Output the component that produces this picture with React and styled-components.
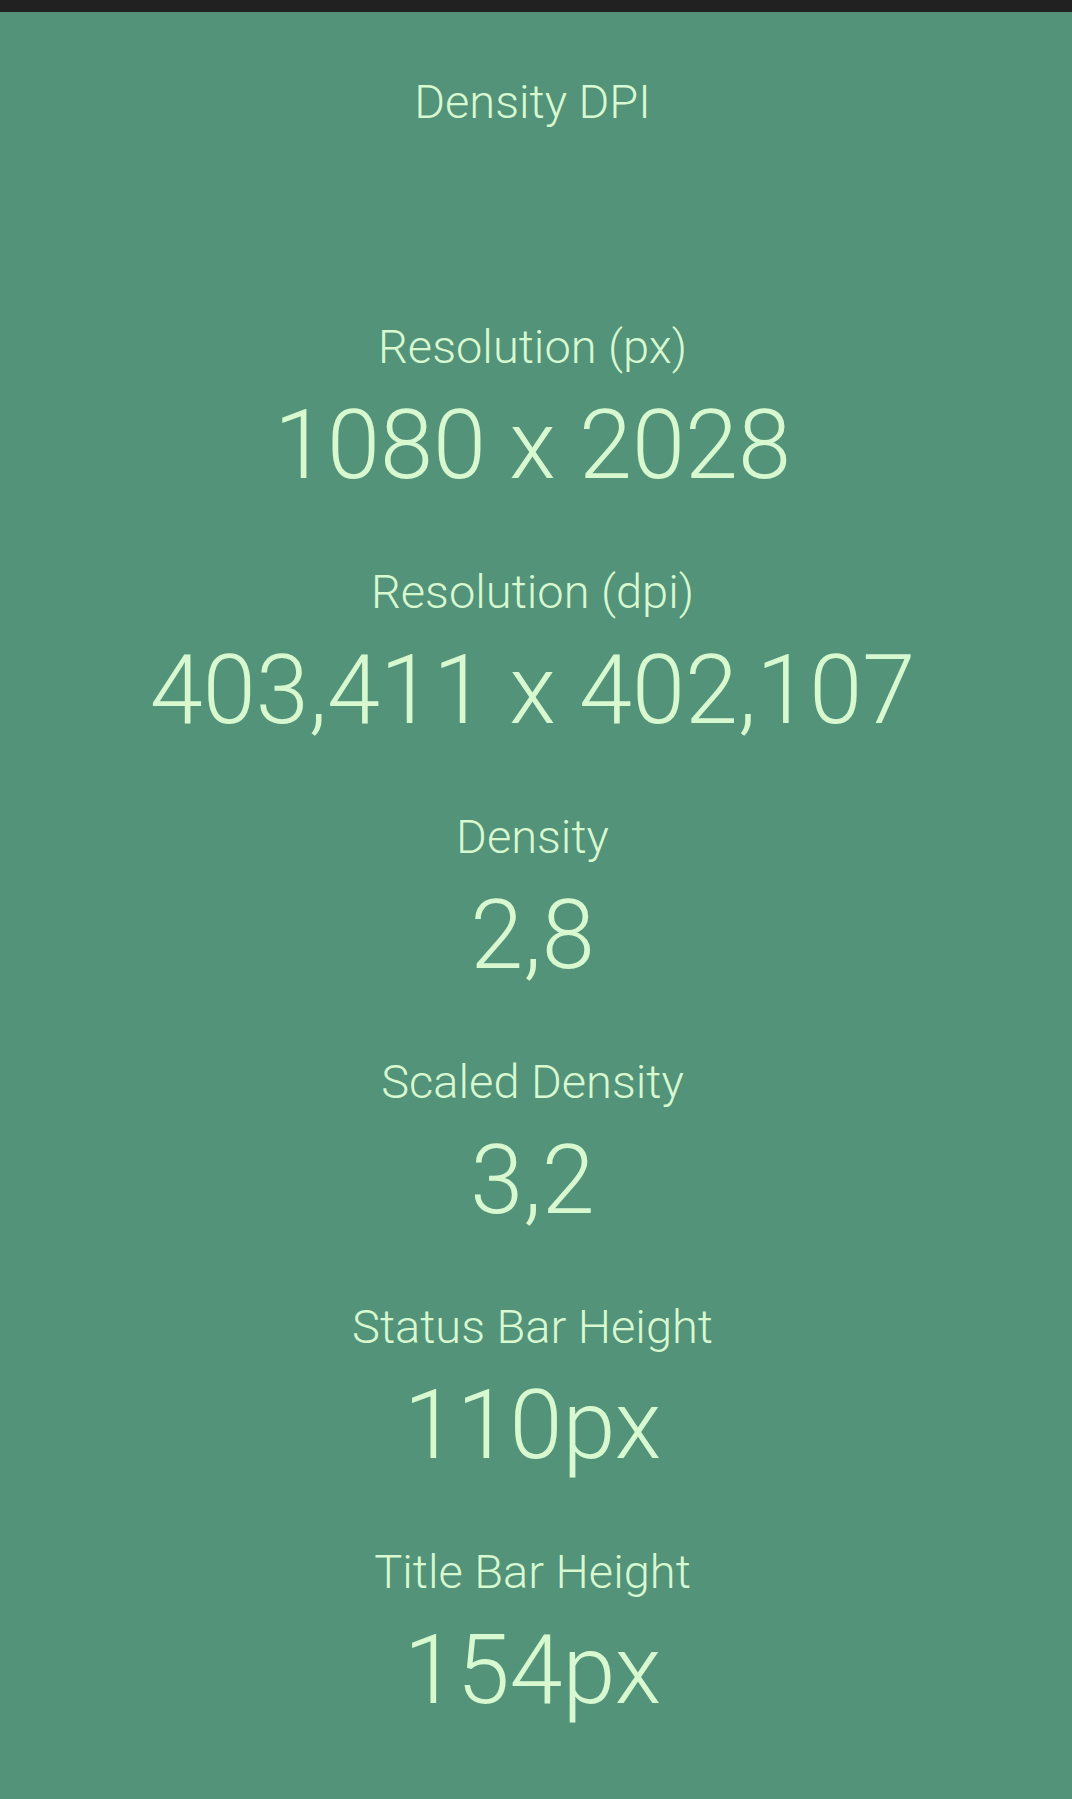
import React from "react";
import styled, { createGlobalStyle } from "styled-components";

const GlobalStyle = createGlobalStyle`
  html, body {
    margin: 0;
    padding: 0;
    background: #52937a;
  }
  body {
    font-family: Roboto, "Noto Sans", "Liberation Sans", sans-serif;
  }
`;

const Screen = styled.div`
  width: 1072px;
  min-height: 1799px;
  background: #52937a;
  display: flex;
  flex-direction: column;
`;

const StatusStrip = styled.div`
  height: 12px;
  background: #212121;
  flex-shrink: 0;
`;

const List = styled.div`
  display: flex;
  flex-direction: column;
  align-items: center;
  padding: 62px 7px 0 0;
  gap: 63px;
`;

const Block = styled.div`
  display: flex;
  flex-direction: column;
  align-items: center;
  gap: 14px;
  width: 100%;
`;

const Label = styled.div`
  font-family: Roboto, "Noto Sans", sans-serif;
  font-weight: 300;
  font-size: 47px;
  line-height: 56px;
  height: 56px;
  color: #d8f8d0;
  text-align: center;
  white-space: nowrap;
`;

const Value = styled.div`
  font-family: Roboto, "Noto Sans", sans-serif;
  font-weight: 300;
  font-size: 95.5px;
  line-height: 112px;
  height: 112px;
  color: #d8f8d0;
  text-align: center;
  white-space: nowrap;
`;

const items = [
  { label: "Density DPI", value: "" },
  { label: "Resolution (px)", value: "1080 x 2028" },
  { label: "Resolution (dpi)", value: "403,411 x 402,107" },
  { label: "Density", value: "2,8" },
  { label: "Scaled Density", value: "3,2" },
  { label: "Status Bar Height", value: "110px" },
  { label: "Title Bar Height", value: "154px" },
];

export default function App() {
  return (
    <>
      <GlobalStyle />
      <Screen>
        <StatusStrip />
        <List>
          {items.map((it) => (
            <Block key={it.label}>
              <Label>{it.label}</Label>
              <Value>{it.value}</Value>
            </Block>
          ))}
        </List>
      </Screen>
    </>
  );
}
